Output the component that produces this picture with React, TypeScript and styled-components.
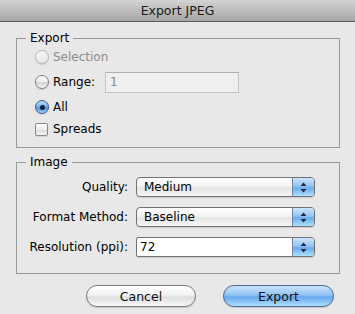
import styled, { createGlobalStyle } from 'styled-components';

const Global = createGlobalStyle`
  html, body {
    margin: 0;
    padding: 0;
    background: #e8e8e8;
  }
  body {
    font-family: "DejaVu Sans", "Noto Sans", sans-serif;
    font-size: 12px;
    color: #000;
  }
`;

const Dialog = styled.div`
  width: 355px;
  height: 314px;
  background: #e8e8e8;
  display: flex;
  flex-direction: column;
  overflow: hidden;
`;

const TitleBar = styled.div`
  box-sizing: border-box;
  height: 22px;
  border-bottom: 1px solid #5c5c5c;
  background: linear-gradient(#d3d3d3, #a6a6a6);
  display: flex;
  align-items: center;
  justify-content: center;
  font-size: 12.5px;
  color: #1a1a1a;
`;

const Body = styled.div`
  display: flex;
  flex-direction: column;
  padding: 9px 15px 0 16px;
  gap: 7px;
`;

const Group = styled.fieldset`
  box-sizing: border-box;
  width: 324px;
  margin: 0;
  padding: 0;
  min-width: 0;
  border: 1px solid #999;
`;

const Caption = styled.legend`
  margin-left: 9px;
  padding: 0 4px;
  line-height: 15px;
  font-size: 12px;
`;

const Options = styled.div`
  display: flex;
  flex-direction: column;
  padding: 1px 0 8px 18px;
`;

const Option = styled.label<{ $gap?: number; $disabled?: boolean }>`
  display: flex;
  align-items: center;
  height: 20px;
  gap: 4px;
  margin-top: ${(p) => p.$gap ?? 0}px;
  color: ${(p) => (p.$disabled ? '#8c8c8c' : '#000')};
`;

const Radio = styled.span<{ $checked?: boolean; $disabled?: boolean }>`
  box-sizing: border-box;
  width: 14px;
  height: 14px;
  border-radius: 50%;
  display: flex;
  align-items: center;
  justify-content: center;
  border: 1px solid ${(p) => (p.$checked ? '#3b5c8c' : p.$disabled ? '#b8b8b8' : '#7e7e7e')};
  background: ${(p) =>
    p.$checked
      ? 'linear-gradient(#b9dafa, #7db5ee 45%, #4d92e2 55%, #9fd0fb)'
      : p.$disabled
      ? 'linear-gradient(#f6f6f6, #e6e6e6)'
      : 'linear-gradient(#ffffff, #e9e9e9 50%, #d4d4d4 55%, #f4f4f4)'};
  box-shadow: 0 1px 1px rgba(0, 0, 0, 0.12);
  &::after {
    content: '';
    display: ${(p) => (p.$checked ? 'block' : 'none')};
    width: 5px;
    height: 5px;
    border-radius: 50%;
    background: #14203a;
  }
`;

const Check = styled.span`
  box-sizing: border-box;
  width: 13px;
  height: 13px;
  margin-right: 1px;
  border: 1px solid #858585;
  border-radius: 2px;
  background: linear-gradient(#ffffff, #ececec 50%, #dcdcdc 55%, #f4f4f4);
  box-shadow: 0 1px 1px rgba(0, 0, 0, 0.1);
`;

const RangeField = styled.div`
  box-sizing: border-box;
  width: 134px;
  height: 21px;
  margin-left: 6px;
  padding-left: 4px;
  display: flex;
  align-items: center;
  border: 1px solid #c4c4c4;
  border-top-color: #b0b0b0;
  background: #efefef;
  color: #8a8a8a;
`;

const Form = styled.div`
  display: grid;
  grid-template-columns: 111px 179px;
  column-gap: 8px;
  row-gap: 10px;
  padding: 7px 0 16px 0;
`;

const FieldLabel = styled.span`
  display: flex;
  align-items: center;
  justify-content: flex-end;
  height: 20px;
`;

const Popup = styled.div<{ $combo?: boolean }>`
  box-sizing: border-box;
  height: 20px;
  display: flex;
  border: 1px solid #737373;
  border-radius: ${(p) => (p.$combo ? '2px 4px 4px 2px' : '4px')};
  background: ${(p) =>
    p.$combo ? '#fff' : 'linear-gradient(#ffffff, #f3f3f3 45%, #e4e4e4 55%, #f6f6f6)'};
  box-shadow: 0 1px 1px rgba(0, 0, 0, 0.12);
  overflow: hidden;
`;

const PopupText = styled.span<{ $combo?: boolean }>`
  flex: 1;
  display: flex;
  align-items: center;
  padding-left: ${(p) => (p.$combo ? 3 : 7)}px;
`;

const Stepper = styled.span`
  width: 21px;
  display: flex;
  align-items: center;
  justify-content: center;
  border-left: 1px solid #6c86ad;
  background: linear-gradient(#cde4fb, #93c4f3 45%, #6aabee 55%, #ace0fd);
`;

const Buttons = styled.div`
  display: flex;
  justify-content: flex-end;
  gap: 27px;
  padding: 11px 21px 0 0;
`;

const Button = styled.button<{ $default?: boolean; $w: number }>`
  box-sizing: border-box;
  width: ${(p) => p.$w}px;
  height: 22px;
  border-radius: 11px;
  border: 1px solid ${(p) => (p.$default ? '#4c6b98' : '#7b7b7b')};
  background: ${(p) =>
    p.$default
      ? 'linear-gradient(#c9e3fc, #92c3f2 45%, #67a8ee 55%, #aedffd)'
      : 'linear-gradient(#ffffff, #f3f3f3 45%, #dedede 55%, #f7f7f7)'};
  box-shadow: 0 1px 1px rgba(0, 0, 0, 0.15);
  font-family: inherit;
  font-size: 12.5px;
  color: #111;
  padding: 0;
`;

const Arrows = () => (
  <svg width="7" height="11" viewBox="0 0 7 11">
    <path d="M3.5 0.5 L6.5 4 L0.5 4 Z" fill="#1c2a48" />
    <path d="M0.5 7 L6.5 7 L3.5 10.5 Z" fill="#1c2a48" />
  </svg>
);

const Select = ({ value, combo }: { value: string; combo?: boolean }) => (
  <Popup $combo={combo}>
    <PopupText $combo={combo}>{value}</PopupText>
    <Stepper>
      <Arrows />
    </Stepper>
  </Popup>
);

export default function App() {
  return (
    <>
      <Global />
      <Dialog>
        <TitleBar>Export JPEG</TitleBar>
        <Body>
          <Group>
            <Caption>Export</Caption>
            <Options>
              <Option $disabled>
                <Radio $disabled />
                Selection
              </Option>
              <Option $gap={5}>
                <Radio />
                Range:
                <RangeField>1</RangeField>
              </Option>
              <Option $gap={5}>
                <Radio $checked />
                All
              </Option>
              <Option $gap={2}>
                <Check />
                Spreads
              </Option>
            </Options>
          </Group>
          <Group>
            <Caption>Image</Caption>
            <Form>
              <FieldLabel>Quality:</FieldLabel>
              <Select value="Medium" />
              <FieldLabel>Format Method:</FieldLabel>
              <Select value="Baseline" />
              <FieldLabel>Resolution (ppi):</FieldLabel>
              <Select value="72" combo />
            </Form>
          </Group>
        </Body>
        <Buttons>
          <Button $w={110}>Cancel</Button>
          <Button $w={111} $default>
            Export
          </Button>
        </Buttons>
      </Dialog>
    </>
  );
}
